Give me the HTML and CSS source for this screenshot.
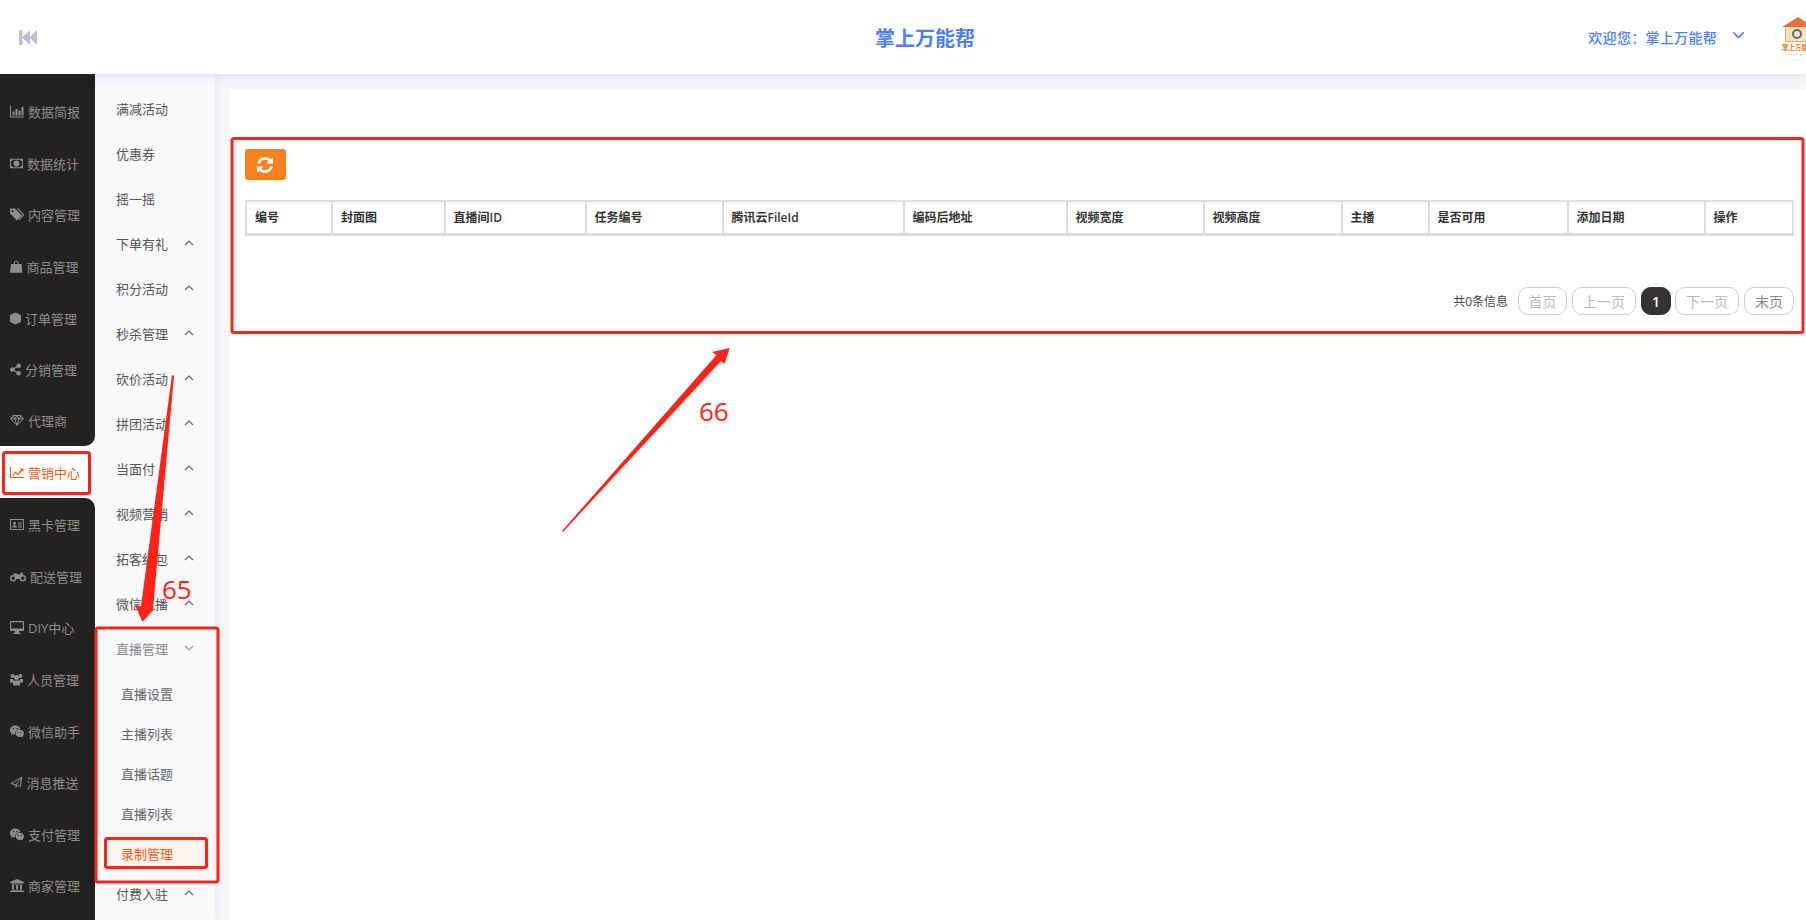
FILE: index.html
```html
<!DOCTYPE html>
<html lang="zh-CN">
<head>
<meta charset="utf-8">
<title>掌上万能帮</title>
<link rel="stylesheet" href="styles.css">
</head>
<body>
<svg class="sprite" aria-hidden="true">
  <symbol id="i-bar" viewBox="0 0 14 12"><path d="M0 0h1v11h13v1H0z"/><path d="M2.500 6h2v4h-2zM5.500 3.500h2V10h-2zM8.500 5h2v5h-2zM11.500 1.500h2V10h-2z"/></symbol>
  <symbol id="i-money" viewBox="0 0 14 10"><path fill-rule="evenodd" d="M0 0h14v10H0zM1 2.500V7.500A2 2 0 0 1 3 9H11A2 2 0 0 1 13 7.500V2.500A2 2 0 0 1 11 1H3A2 2 0 0 1 1 2.500zM7 1.800A3.200 3.200 0 1 0 7 8.200 3.200 3.200 0 0 0 7 1.800z"/><path d="M6.300 3.400h1.300v3.200h.7v.6H5.800v-.6h.7V4.200l-.6.300z"/></symbol>
  <symbol id="i-tags" viewBox="0 0 14 12"><path fill-rule="evenodd" d="M0 0h5l6.500 6.500q.5.500 0 1L7.500 11.500q-.5.500-1 0L0 5zM2.500 1.500a1 1 0 1 0 0 2 1 1 0 0 0 0-2z"/><path d="M7 0h1.500l5.200 5.600q.6.900 0 1.800L9.600 11.700 8.800 10.900l3.800-4q.4-.5 0-1z"/></symbol>
  <symbol id="i-bag" viewBox="0 0 13 13"><path d="M1 4h11l1 9H0z"/><path d="M4 5V3a2.500 2.500 0 0 1 5 0v2H8V3a1.500 1.500 0 0 0-3 0v2z"/></symbol>
  <symbol id="i-cube" viewBox="0 0 11 12"><path d="M5.500 0L11 2.500v7L5.500 12 0 9.500v-7z"/></symbol>
  <symbol id="i-share" viewBox="0 0 11 12"><circle cx="2.300" cy="6" r="2.300"/><circle cx="8.700" cy="2.300" r="2.300"/><circle cx="8.700" cy="9.700" r="2.300"/><path d="M2 5.400L8.400 1.700l.6 1L2.600 6.400zM2.600 5.600L9 9.300l-.6 1L2 6.600z"/></symbol>
  <symbol id="i-gem" viewBox="0 0 14 11"><path d="M3 .5h8l2.500 3.300L7 10.300.5 3.800zM.5 3.800h13M4.800 3.800L7 10.300l2.200-6.500M3 .5l1.800 3.300L7 .5l2.200 3.300L11 .5" fill="none" stroke="currentColor"/></symbol>
  <symbol id="i-line" viewBox="0 0 14 11"><path d="M0 0h1v10h13v1H0z"/><path d="M2 8.500l3.300-4 2.500 2L11 2.500 9.800 1.500h3.700v3.600l-1.100-1.300-4.500 4.500-2.500-2-2.700 3z"/></symbol>
  <symbol id="i-card" viewBox="0 0 14 11"><path fill-rule="evenodd" d="M0 0h14v11H0zM1 1v9h12V1z"/><circle cx="4.500" cy="4.300" r="1.500"/><path d="M2 8.500c0-3 5-3 5 0zM8 3.500h4v1H8zM8 5.500h4v1H8zM8 7.500h4v1H8z"/></symbol>
  <symbol id="i-moto" viewBox="0 0 16 10"><path fill-rule="evenodd" d="M3.200 3.600a3.200 3.200 0 1 0 0 6.400 3.200 3.200 0 0 0 0-6.400zM3.200 5a1.800 1.800 0 1 1 0 3.600 1.800 1.800 0 0 1 0-3.600zM12.800 3.600a3.200 3.200 0 1 0 0 6.400 3.200 3.200 0 0 0 0-6.400zM12.800 5a1.800 1.800 0 1 1 0 3.600 1.800 1.800 0 0 1 0-3.600z"/><path d="M2.500 2h4l1.500 1h2l1-2h1.500l.8 2.600-2.300 1.400-1.500 2.500H6L5 4z"/></symbol>
  <symbol id="i-desk" viewBox="0 0 14 13"><path fill-rule="evenodd" d="M1 0h12q1 0 1 1v8q0 1-1 1H1q-1 0-1-1V1q0-1 1-1zM1.200 1.200v6.300h11.600V1.200z"/><path d="M5 10h4l.5 2h1v1h-7v-1h1z"/></symbol>
  <symbol id="i-users" viewBox="0 0 13 12"><circle cx="2.600" cy="2.500" r="2"/><circle cx="10.400" cy="2.500" r="2"/><circle cx="6.500" cy="4" r="2.500"/><path d="M0 5.500h3l.5 2-1 1.500H0zM13 5.500h-3l-.5 2 1 1.500H13zM3.500 7h6l1 2.500L9.500 12h-6l-1-2.500z"/></symbol>
  <symbol id="i-wechat" viewBox="0 0 14 12"><path fill-rule="evenodd" d="M5.200 0C8 0 10 1.600 10.400 3.700 7.500 3.600 5 5.600 5 8c0 .3 0 .6.100.9-.6 0-1.200-.1-1.800-.3L1.200 9.700l.5-1.800C.6 7.100 0 6 0 4.500 0 2 2.300 0 5.200 0zM3.400 2.300a.7.700 0 1 0 0 1.400.7.700 0 0 0 0-1.400zM7 2.300a.7.700 0 1 0 0 1.400.7.700 0 0 0 0-1.400z"/><path fill-rule="evenodd" d="M9.800 4.300C12.100 4.300 14 5.900 14 7.900c0 1.100-.6 2-1.400 2.700l.4 1.400-1.600-.8c-.5.100-1 .2-1.600.2-2.300 0-4.200-1.600-4.200-3.500s1.900-3.600 4.200-3.600zM8.300 6.400a.6.600 0 1 0 0 1.200.6.600 0 0 0 0-1.200zM11.100 6.400a.6.600 0 1 0 0 1.200.6.600 0 0 0 0-1.200z"/></symbol>
  <symbol id="i-plane" viewBox="0 0 13 13"><path fill-rule="evenodd" d="M13 0L11 11.500 7.600 10.100 5.700 12.800V10L.2 7.500zM11.200 2.200L2.600 7.300l3.300 1.400zM11.200 2.800L6.900 9.200l3.200 1.300z"/></symbol>
  <symbol id="i-bank" viewBox="0 0 14 13"><path d="M7 0l7 3v1H0V3zM1 4.500h12v1H1zM2 6h2v4.500H2zM6 6h2v4.500H6zM10 6h2v4.500h-2zM1 11h12v.8H1zM0 12h14v1H0z"/></symbol>
  <symbol id="i-up" viewBox="0 0 10 6"><path d="M1 5l4-4 4 4" fill="none" stroke="currentColor" stroke-width="1.200"/></symbol>
  <symbol id="i-down" viewBox="0 0 10 6"><path d="M1 1l4 4 4-4" fill="none" stroke="currentColor" stroke-width="1.200"/></symbol>
</svg>

<div class="app">
  <header class="topbar">
    <div class="topbar-left">
      <svg class="back-icon" viewBox="0 0 18 15"><path d="M0 0h3.500v15H0zM3 7.500L11 0v15zM10.500 7.500L18 0v15z"/></svg>
    </div>
    <div class="title">掌上万能帮</div>
    <div class="topbar-right">
      <span class="welcome">欢迎您：掌上万能帮</span>
      <svg class="welcome-caret"><use href="#i-down"/></svg>
      <div class="avatar">
        <svg viewBox="0 0 44 44" class="avatar-art">
          <path d="M5 12L21 2l16 10z" fill="#e9703a"/>
          <path d="M8 12h28v14H8z" fill="#f4e3bb"/>
          <path d="M8 26h28v1H8zM8 12h1v14H8z" fill="#d9b45e"/>
          <circle cx="20" cy="19" r="4" fill="none" stroke="#5a6a8a" stroke-width="2"/>
          <text x="5" y="35" class="avatar-text">掌上万能</text>
          <path d="M5 39.500h24" stroke="#f0a070" stroke-width="1" stroke-dasharray="1 2"/>
        </svg>
      </div>
    </div>
  </header>

  <div class="layout">
    <nav class="rail">
      <div class="rail-group rail-group-first">
        <a class="rail-item"><svg class="ri w14"><use href="#i-bar"/></svg>数据简报</a>
        <a class="rail-item"><svg class="ri w13"><use href="#i-money"/></svg>数据统计</a>
        <a class="rail-item"><svg class="ri w14"><use href="#i-tags"/></svg>内容管理</a>
        <a class="rail-item"><svg class="ri w12"><use href="#i-bag"/></svg>商品管理</a>
        <a class="rail-item"><svg class="ri w11"><use href="#i-cube"/></svg>订单管理</a>
        <a class="rail-item"><svg class="ri w11"><use href="#i-share"/></svg>分销管理</a>
        <a class="rail-item"><svg class="ri w14"><use href="#i-gem"/></svg>代理商</a>
      </div>
      <a class="rail-item rail-item-active"><svg class="ri w14"><use href="#i-line"/></svg>营销中心</a>
      <div class="rail-group rail-group-last">
        <a class="rail-item"><svg class="ri w14"><use href="#i-card"/></svg>黑卡管理</a>
        <a class="rail-item"><svg class="ri w16"><use href="#i-moto"/></svg>配送管理</a>
        <a class="rail-item"><svg class="ri w14"><use href="#i-desk"/></svg>DIY中心</a>
        <a class="rail-item"><svg class="ri w13"><use href="#i-users"/></svg>人员管理</a>
        <a class="rail-item"><svg class="ri w14"><use href="#i-wechat"/></svg>微信助手</a>
        <a class="rail-item"><svg class="ri w12"><use href="#i-plane"/></svg>消息推送</a>
        <a class="rail-item"><svg class="ri w14"><use href="#i-wechat"/></svg>支付管理</a>
        <a class="rail-item"><svg class="ri w14"><use href="#i-bank"/></svg>商家管理</a>
      </div>
    </nav>

    <nav class="submenu">
      <a class="sub-item">满减活动</a>
      <a class="sub-item">优惠券</a>
      <a class="sub-item">摇一摇</a>
      <a class="sub-item">下单有礼<svg class="caret"><use href="#i-up"/></svg></a>
      <a class="sub-item">积分活动<svg class="caret"><use href="#i-up"/></svg></a>
      <a class="sub-item">秒杀管理<svg class="caret"><use href="#i-up"/></svg></a>
      <a class="sub-item">砍价活动<svg class="caret"><use href="#i-up"/></svg></a>
      <a class="sub-item">拼团活动<svg class="caret"><use href="#i-up"/></svg></a>
      <a class="sub-item">当面付<svg class="caret"><use href="#i-up"/></svg></a>
      <a class="sub-item">视频营销<svg class="caret"><use href="#i-up"/></svg></a>
      <a class="sub-item">拓客红包<svg class="caret"><use href="#i-up"/></svg></a>
      <a class="sub-item">微信直播<svg class="caret"><use href="#i-up"/></svg></a>
      <a class="sub-item sub-item-open">直播管理<svg class="caret"><use href="#i-down"/></svg></a>
      <a class="sub-child">直播设置</a>
      <a class="sub-child">主播列表</a>
      <a class="sub-child">直播话题</a>
      <a class="sub-child">直播列表</a>
      <a class="sub-child sub-child-active">录制管理</a>
      <a class="sub-item">付费入驻<svg class="caret"><use href="#i-up"/></svg></a>
    </nav>

    <main class="main">
      <section class="card">
        <button class="refresh" type="button">
          <svg class="refresh-icon" viewBox="128 128 1536 1536"><path d="M1639 1056q0 5-1 7-64 268-268 434.500t-478 166.500q-146 0-282.500-55t-243.500-157l-129 129q-19 19-45 19t-45-19-19-45v-448q0-26 19-45t45-19h448q26 0 45 19t19 45-19 45l-137 137q71 66 161 102t187 36q134 0 250-65t186-179q11-17 53-117 8-23 30-23h192q13 0 22.500 9.500t9.500 22.500zm25-800v448q0 26-19 45t-45 19h-448q-26 0-45-19t-19-45 19-45l138-138q-148-137-349-137-134 0-250 65t-186 179q-11 17-53 117-8 23-30 23h-199q-13 0-22.500-9.500t-9.500-22.500v-7q65-268 270-434.500t480-166.500q146 0 284 55.500t245 156.500l130-129q19-19 45-19t45 19 19 45z"/></svg>
        </button>
        <table class="grid">
          <thead>
            <tr>
              <th>编号</th><th>封面图</th><th>直播间ID</th><th>任务编号</th><th>腾讯云FileId</th><th>编码后地址</th><th>视频宽度</th><th>视频高度</th><th>主播</th><th>是否可用</th><th>添加日期</th><th>操作</th>
            </tr>
          </thead>
        </table>
        <div class="pager">
          <span class="pager-info">共0条信息</span>
          <a class="page page-first">首页</a>
          <a class="page page-wide">上一页</a>
          <a class="page page-current">1</a>
          <a class="page page-wide">下一页</a>
          <a class="page page-last">末页</a>
        </div>
      </section>
    </main>
  </div>

  <svg class="marks" viewBox="0 0 1806 920" aria-hidden="true">
    <rect x="232" y="138.500" width="1571" height="194" rx="2"/>
    <rect x="3.500" y="452.500" width="86" height="41" rx="2"/>
    <rect x="96" y="628" width="122" height="254" rx="2"/>
    <rect x="105.500" y="838.500" width="101" height="29" rx="2"/>
    <polygon points="172,375 174,376 153,609 154,609 142.500,622 135,605 141,606"/>
    <polygon points="562,531 716.500,355 712,352 729.700,348 724.500,364 721,361 563,532"/>
  </svg>
  <span class="mark-num mark-65">65</span>
  <span class="mark-num mark-66">66</span>
</div>
</body>
</html>
```
FILE: styles.css
```css
* { box-sizing: border-box; }
html, body { margin: 0; height: 100%; overflow: hidden; }
body {
  font-family: "Open Sans", "Noto Sans CJK SC", sans-serif;
  font-size: 13px;
  color: #555;
  background: #fff;
}
.sprite { position: absolute; width: 0; height: 0; }
.app { position: relative; width: 1806px; height: 920px; overflow: hidden; display: flex; flex-direction: column; }

.topbar {
  position: relative;
  z-index: 2;
  flex: 0 0 74px;
  display: grid;
  grid-template-columns: 875px 101px 1fr;
  align-items: center;
  background: #fff;
  box-shadow: 0 2px 10px rgba(60, 70, 90, .12);
}
.topbar-left { padding-left: 19px; display: flex; }
.back-icon { width: 18px; height: 15px; fill: #b9c3cf; }
.title { font-size: 20px; font-weight: 700; color: #4d7ffb; white-space: nowrap; }
.topbar-right { display: flex; align-items: center; justify-content: flex-end; }
.welcome { font-size: 14px; font-weight: 500; letter-spacing: .3px; color: #4d7ffb; white-space: nowrap; }
.welcome-caret { width: 13px; height: 8px; margin: -4px 32px 0 15px; color: #4d7ffb; }
.avatar {
  flex: 0 0 44px;
  width: 44px;
  height: 44px;
  margin-right: -15px;
  border-radius: 50%;
  background: #fff;
  box-shadow: 0 0 4px rgba(0, 0, 0, .08);
  overflow: hidden;
}
.avatar-art { display: block; width: 44px; height: 44px; }
.avatar-text { font-size: 6.500px; font-weight: 700; fill: #ee7424; }

.layout { flex: 1; display: flex; min-height: 0; }

.rail { flex: 0 0 95px; display: flex; flex-direction: column; background: #fff; }
.rail-group { background: #242221; }
.rail-group-first { padding-top: 12px; border-bottom-right-radius: 10px; }
.rail-group-first .rail-item:last-child { height: 50px; }
.rail-group-last { flex: 1; padding-top: 1.400px; border-top-right-radius: 10px; }
.rail-item {
  height: 51.600px;
  display: flex;
  align-items: center;
  gap: 4px;
  padding-left: 10px;
  color: #8d8d8d;
  white-space: nowrap;
}
.rail-item-active { height: 52px; padding-top: 1px; color: #ff5a14; background: #fff; }
.ri { height: 13px; fill: currentColor; flex: none; }
.w11 { width: 11px; }
.w12 { width: 12.500px; }
.w13 { width: 13px; }
.w14 { width: 14px; }
.w16 { width: 16px; }

.submenu {
  position: relative;
  z-index: 1;
  flex: 0 0 120px;
  padding-top: 12px;
  background: #f7f9fb;
  box-shadow: 2px 0 8px rgba(60, 70, 90, .06);
}
.sub-item {
  position: relative;
  height: 45px;
  display: flex;
  align-items: center;
  padding-left: 21px;
  color: #555;
}
.sub-item-open { margin-bottom: 2px; color: #8a8a8a; }
.caret { position: absolute; left: 89px; top: 19px; width: 10px; height: 6px; color: #666; }
.sub-item-open .caret { color: #999; }
.sub-child {
  height: 40px;
  display: flex;
  align-items: center;
  padding-left: 26px;
  color: #666;
}
.sub-child-active {
  margin-left: 12px;
  margin-bottom: -2px;
  padding-left: 14px;
  color: #ff5a14;
  background: #fff4ef;
}

.main { flex: 1; min-width: 0; padding: 15px 0 0 15px; background: #f6f7f9; }
.card { height: 100%; padding: 60px 12px 0 15px; background: #fff; }
.refresh {
  display: flex;
  align-items: center;
  justify-content: center;
  width: 41px;
  height: 31px;
  padding: 0;
  border: 0;
  border-radius: 3px;
  background: #f7811e;
}
.refresh-icon { width: 16px; height: 16px; margin-left: -2px; fill: #fff; }
.grid {
  width: 1549px;
  margin-top: 20px;
  table-layout: fixed;
  border-collapse: separate;
  border-spacing: 0;
  border-left: 2px solid #ddd;
  border-top: 2px solid #ddd;
  border-bottom: 3px solid #ddd;
}
.grid th {
  height: 31px;
  padding: 0 0 1px 8px;
  border-right: 2px solid #ddd;
  text-align: left;
  font-weight: 600;
  font-size: 12px;
  color: #333;
  white-space: nowrap;
}
.grid th:nth-child(1) { width: 86px; }
.grid th:nth-child(2) { width: 112.500px; }
.grid th:nth-child(3) { width: 141px; }
.grid th:nth-child(4) { width: 137px; }
.grid th:nth-child(5) { width: 181px; }
.grid th:nth-child(6) { width: 163px; }
.grid th:nth-child(7) { width: 137px; }
.grid th:nth-child(8) { width: 138px; }
.grid th:nth-child(9) { width: 87px; }
.grid th:nth-child(10) { width: 139px; }
.grid th:nth-child(11) { width: 137px; }
.grid th:nth-child(12) { width: 88.500px; }

.pager {
  width: 1549px;
  margin-top: 51px;
  display: flex;
  align-items: center;
  justify-content: flex-end;
  gap: 5px;
}
.pager-info { margin-right: 5px; font-size: 12px; color: #444; }
.page {
  height: 28px;
  display: flex;
  align-items: center;
  justify-content: center;
  border: 1px solid #ccc;
  border-radius: 10px;
  font-size: 14px;
  color: #bbb;
  background: #fff;
}
.page-first { width: 49px; }
.page-last { width: 50px; color: #888; }
.page-wide { width: 64px; }
.page-current { width: 30px; margin-right: -1px; border-color: #333; background: #333; color: #fff; font-weight: 600; }

.marks { position: absolute; left: 0; top: 0; width: 1806px; height: 920px; z-index: 5; pointer-events: none; }
.marks rect { fill: none; stroke: #ff2318; stroke-width: 3; }
.marks polygon { fill: #ff2318; }
.mark-num {
  position: absolute;
  z-index: 6;
  font-family: "Open Sans", sans-serif;
  font-size: 26px;
  line-height: 30px;
  color: #ff2318;
}
.mark-65 { left: 162px; top: 574px; }
.mark-66 { left: 699px; top: 396px; }
```
